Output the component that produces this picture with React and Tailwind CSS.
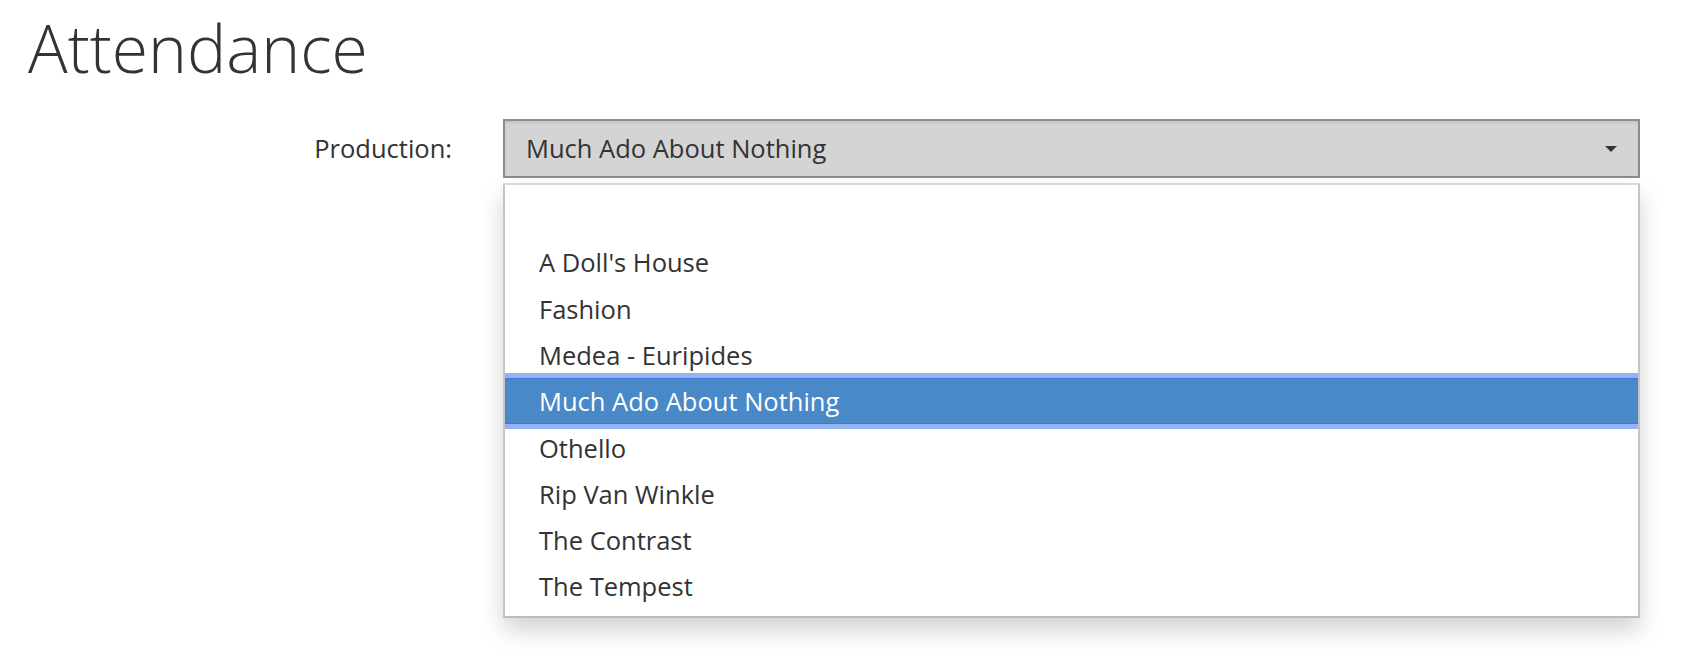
import React from "react";

const items = [
  "",
  "A Doll's House",
  "Fashion",
  "Medea - Euripides",
  "Much Ado About Nothing",
  "Othello",
  "Rip Van Winkle",
  "The Contrast",
  "The Tempest",
];

export default function App() {
  return (
    <div
      className="min-h-[666px] w-full bg-white text-[#333333]"
      style={{ fontFamily: '"Open Sans", "Noto Sans", sans-serif' }}
    >
      <h1 className="pl-[28px] pt-[14px] text-[66px] font-light leading-[66px] text-[#333333]">
        Attendance
      </h1>
      <div className="mt-[39px] flex items-start pr-[54px]">
        <div className="flex h-[59px] w-[452px] shrink-0 items-center justify-end text-[25.5px] text-[#333333]">
          Production:
        </div>
        <div className="ml-[51px] flex-1">
          <div className="flex h-[59px] items-center justify-between border-2 border-[#8c8c8c] bg-[#d4d4d4] pl-[21px] pr-[20px] text-[25.5px] shadow-[inset_0_2px_3px_rgba(0,0,0,0.08)]">
            <span>Much Ado About Nothing</span>
            <svg width="12" height="6" viewBox="0 0 12 6" className="mr-[1px]">
              <path d="M0 0 L12 0 L6 6 Z" fill="#333333" />
            </svg>
          </div>
          <div className="mt-[5px] border-2 border-t-[#dadada] border-x-[#c4c4c4] border-b-[#bdbdbd] bg-white pt-[8px] pb-[6px] shadow-[0_12px_22px_rgba(0,0,0,0.18)]">
            {items.map((it, i) =>
              it === "Much Ado About Nothing" ? (
                <div
                  key={i}
                  className="flex h-[46.3px] items-center border-y border-[#3b7bd8] bg-[#4a89c7] pl-[34px] text-[25.5px] text-white shadow-[0_-5px_0_#94b3f2,0_5px_0_#94b3f2]"
                >
                  {it}
                </div>
              ) : (
                <div
                  key={i}
                  className="flex h-[46.3px] items-center pl-[34px] text-[25.5px] text-[#333333]"
                >
                  {it}
                </div>
              )
            )}
          </div>
        </div>
      </div>
    </div>
  );
}
